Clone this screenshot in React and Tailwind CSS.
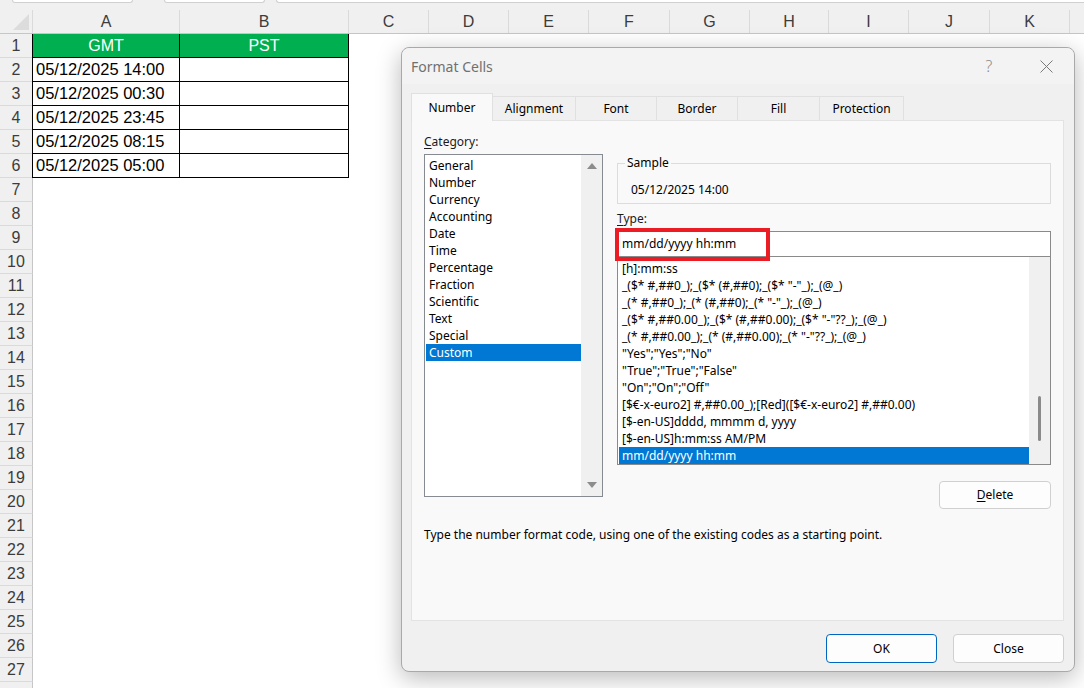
const COLS = [
  { label: "C", w: "w-[80px]" },
  { label: "D", w: "w-[80px]" },
  { label: "E", w: "w-[80px]" },
  { label: "F", w: "w-[81px]" },
  { label: "G", w: "w-[80px]" },
  { label: "H", w: "w-[79px]" },
  { label: "I", w: "w-[80px]" },
  { label: "J", w: "w-[81px]" },
  { label: "K", w: "w-[80px]" },
];

const TIMES = [
  "05/12/2025 14:00",
  "05/12/2025 00:30",
  "05/12/2025 23:45",
  "05/12/2025 08:15",
  "05/12/2025 05:00",
];

const CATEGORIES = [
  "General",
  "Number",
  "Currency",
  "Accounting",
  "Date",
  "Time",
  "Percentage",
  "Fraction",
  "Scientific",
  "Text",
  "Special",
  "Custom",
];

const FORMATS = [
  "[h]:mm:ss",
  '_($* #,##0_);_($* (#,##0);_($* "-"_);_(@_)',
  '_(* #,##0_);_(* (#,##0);_(* "-"_);_(@_)',
  '_($* #,##0.00_);_($* (#,##0.00);_($* "-"??_);_(@_)',
  '_(* #,##0.00_);_(* (#,##0.00);_(* "-"??_);_(@_)',
  '"Yes";"Yes";"No"',
  '"True";"True";"False"',
  '"On";"On";"Off"',
  "[$€-x-euro2] #,##0.00_);[Red]([$€-x-euro2] #,##0.00)",
  "[$-en-US]dddd, mmmm d, yyyy",
  "[$-en-US]h:mm:ss AM/PM",
  "mm/dd/yyyy hh:mm",
];

const TABS = [
  { label: "Number", w: "w-[82px]" },
  { label: "Alignment", w: "w-[83px]" },
  { label: "Font", w: "w-[81px]" },
  { label: "Border", w: "w-[81px]" },
  { label: "Fill", w: "w-[82px]" },
  { label: "Protection", w: "w-[84px]" },
];

const RowHead = ({ n }) => (
  <div className="w-[33px] h-[24px] shrink-0 bg-[#f0f0f0] border-r border-b border-r-[#c6c6c6] border-b-[#dadada] flex items-center justify-center text-[16px] text-[#3c3c3c]">
    {n}
  </div>
);

const Sheet = () => {
  const rows = [];
  for (let r = 7; r <= 27; r++) rows.push(r);
  return (
    <div className="flex flex-col" style={{ fontFamily: '"Liberation Sans", Arial, sans-serif' }}>
      {/* bits of name box / formula bar */}
      <div className="h-[10px] bg-[#f0f0f0] flex items-start">
        <div className="ml-[12px] w-[121px] h-[3px] bg-white border-x border-b border-[#d0d0d0] rounded-b-[3px]"></div>
        <div className="ml-[31px] w-[101px] h-[3px] bg-white border-x border-b border-[#d0d0d0] rounded-b-[3px]"></div>
        <div className="ml-[11px] flex-1 h-[3px] bg-white border-l border-b border-[#d0d0d0] rounded-bl-[3px]"></div>
      </div>

      {/* column headers */}
      <div className="flex h-[24px] bg-[#f0f0f0] border-b border-[#c6c6c6] text-[16px] text-[#3c3c3c]">
        <div className="w-[33px] shrink-0 flex items-end justify-end pr-[3px] pb-[3px] border-r border-[#dadada]">
          <svg width="16" height="16" viewBox="0 0 16 16">
            <polygon points="16,0 16,16 0,16" fill="#dcdcdc" />
          </svg>
        </div>
        <div className="w-[147px] shrink-0 flex items-center justify-center border-r border-[#dadada]">A</div>
        <div className="w-[169px] shrink-0 flex items-center justify-center border-r border-[#dadada]">B</div>
        {COLS.map((c) => (
          <div key={c.label} className={`${c.w} shrink-0 flex items-center justify-center border-r border-[#dadada]`}>
            {c.label}
          </div>
        ))}
      </div>

      {/* row 1 */}
      <div className="flex">
        <RowHead n={1} />
        <div className="w-[148px] h-[24px] -ml-px shrink-0 bg-[#00b050] border-x border-b border-black flex items-center justify-center text-white text-[16px]">
          GMT
        </div>
        <div className="w-[169px] h-[24px] shrink-0 bg-[#00b050] border-r border-b border-black flex items-center justify-center text-white text-[16px]">
          PST
        </div>
      </div>

      {TIMES.map((t, i) => (
        <div key={t} className="flex">
          <RowHead n={i + 2} />
          <div className="w-[148px] h-[24px] -ml-px shrink-0 border-x border-b border-black flex items-center pl-[3px] text-[16.5px] text-black">
            {t}
          </div>
          <div className="w-[169px] h-[24px] shrink-0 border-r border-b border-black"></div>
        </div>
      ))}

      {rows.map((r) => (
        <div key={r} className="flex">
          <RowHead n={r} />
        </div>
      ))}
      <div className="flex">
        <RowHead n="" />
      </div>
    </div>
  );
};

const Dialog = () => (
  <div
    className="absolute left-[401px] top-[47px] w-[674px] h-[625px] bg-[#f0f0f0] border border-[#a9a9a9] rounded-[8px] shadow-[0_6px_24px_rgba(0,0,0,0.28)] flex flex-col text-[12px] text-[#1a1a1a]"
    style={{ fontFamily: '"Noto Sans", "Open Sans", sans-serif' }}
  >
    {/* title bar */}
    <div className="h-[36px] shrink-0 flex items-center pl-[9px] rounded-t-[8px] bg-[#f3f3f3]">
      <span className="text-[14px] text-[#707070]">Format Cells</span>
      <div className="ml-auto flex items-center">
        <div className="w-[46px] flex justify-center text-[16px] font-light text-[#8a8a8a]">?</div>
        <div className="w-[46px] ml-[11px] mr-[5px] flex justify-center">
          <svg width="13" height="13" viewBox="0 0 13 13">
            <path d="M0.5 0.5 L12.5 12.5 M12.5 0.5 L0.5 12.5" stroke="#7a7a7a" strokeWidth="1" />
          </svg>
        </div>
      </div>
    </div>

    {/* tabs */}
    <div className="h-[36px] shrink-0 flex items-end pl-[9px]">
      {TABS.map((t, i) =>
        i === 0 ? (
          <div
            key={t.label}
            className={`${t.w} h-[28px] -mb-px relative z-10 bg-[#f9f9f9] border-x border-t border-[#e0e0e0] flex items-center justify-center text-black pt-[1px]`}
          >
            {t.label}
          </div>
        ) : (
          <div
            key={t.label}
            className={`${t.w} h-[24px] bg-[#f0f0f0] border-r border-t border-[#e0e0e0] flex items-center justify-center text-black pt-[1px]`}
          >
            {t.label}
          </div>
        )
      )}
    </div>

    {/* panel */}
    <div className="ml-[9px] w-[653px] h-[501px] shrink-0 bg-[#f9f9f9] border border-[#e3e3e3] flex flex-col pt-[13px] pl-[12px]">
      <div className="flex">
        {/* category */}
        <div className="w-[179px] flex flex-col">
          <div className="leading-[16px] h-[16px]">
            <span className="underline underline-offset-2">C</span>ategory:
          </div>
          <div className="mt-[4px] h-[343px] bg-white border border-[#868a91] flex">
            <div className="flex-1 pt-[2px] pl-[1px]">
              {CATEGORIES.map((c) => (
                <div
                  key={c}
                  className={`h-[17px] leading-[17px] pl-[3px] ${c === "Custom" ? "bg-[#0078d4] text-white" : "text-black"}`}
                >
                  {c}
                </div>
              ))}
            </div>
            <div className="w-[21px] bg-[#f0f0f0] flex flex-col items-center justify-between pt-[8px] pb-[8px]">
              <svg width="10" height="6" viewBox="0 0 10 6">
                <polygon points="5,0 10,6 0,6" fill="#8c8c8c" />
              </svg>
              <svg width="10" height="6" viewBox="0 0 10 6">
                <polygon points="0,0 10,0 5,6" fill="#8c8c8c" />
              </svg>
            </div>
          </div>
        </div>

        {/* right side */}
        <div className="ml-[14px] w-[434px] flex flex-col pt-[21px]">
          <fieldset className="h-[49px] border border-[#dcdcdc] px-0">
            <legend className="ml-[7px] px-[2px] leading-[16px] text-black">Sample</legend>
            <div className="pl-[13px] pt-[11px] leading-[16px] text-black">05/12/2025 14:00</div>
          </fieldset>

          <div className="mt-[7px] leading-[16px] h-[16px]">
            <span className="underline underline-offset-2">T</span>ype:
          </div>
          <div className="mt-[4px] relative h-[26px] bg-white border border-[#8a8a8a] flex items-center pl-[4px] text-black">
            mm/dd/yyyy hh:mm
            <div className="absolute left-[-3px] top-[-4px] w-[155px] h-[33px] border-[4px] border-[#ec1c24]"></div>
          </div>
          <div className="h-[208px] bg-white border-x border-b border-[#8a8a8a] flex">
            <div className="flex-1 pt-[3px] pl-[1px]">
              {FORMATS.map((f, i) => (
                <div
                  key={f}
                  className={`h-[17px] leading-[17px] pl-[3px] whitespace-pre ${i === FORMATS.length - 1 ? "bg-[#0078d4] text-white" : "text-black"}`}
                >
                  {f}
                </div>
              ))}
            </div>
            <div className="w-[21px] bg-[#f0f0f0] flex justify-center pt-[139px]">
              <div className="w-[3px] h-[45px] rounded-full bg-[#8a8a8a]"></div>
            </div>
          </div>

          <div className="mt-[16px] flex justify-end">
            <button className="w-[112px] h-[28px] bg-[#fdfdfd] border border-[#d0d0d0] rounded-[4px] text-black">
              <span className="underline underline-offset-2">D</span>elete
            </button>
          </div>
        </div>
      </div>

      <div className="mt-[18px] leading-[16px] text-black">
        Type the number format code, using one of the existing codes as a starting point.
      </div>
    </div>

    {/* footer */}
    <div className="mt-[13px] flex justify-end pr-[10px] gap-[16px]">
      <button className="w-[111px] h-[29px] bg-[#fdfdfd] border-[1.5px] border-[#0067c0] rounded-[4px] text-black">
        OK
      </button>
      <button className="w-[111px] h-[29px] bg-[#fdfdfd] border border-[#d0d0d0] rounded-[4px] text-black">
        Close
      </button>
    </div>
  </div>
);

export default function App() {
  return (
    <div className="relative w-[1084px] h-[688px] overflow-hidden bg-white">
      <Sheet />
      <Dialog />
    </div>
  );
}
